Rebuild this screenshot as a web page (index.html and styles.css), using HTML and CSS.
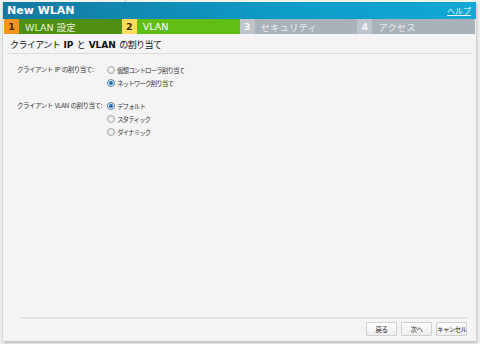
FILE: index.html
```html
<!DOCTYPE html>
<html lang="ja">
<head>
    <meta charset="UTF-8">
    <title>New WLAN</title>
    <link rel="stylesheet" href="styles.css">
</head>
<body>
    <div class="top-strip"><span class="strip-line"></span></div>

    <div class="dialog">
        <div class="title-bar">
            <span class="title">New WLAN</span>
            <a class="help" href="#">ヘルプ</a>
        </div>

        <div class="steps">
            <div class="step done"><span class="num">1</span><span class="label">WLAN 設定</span></div>
            <div class="step active"><span class="num">2</span><span class="label">VLAN</span></div>
            <div class="step todo"><span class="num">3</span><span class="label">セキュリティ</span></div>
            <div class="step todo"><span class="num">4</span><span class="label">アクセス</span></div>
        </div>

        <div class="content">
            <h2 class="section-title">クライアント <b>IP</b> と <b>VLAN</b> の割り当て</h2>

            <div class="form-row">
                <div class="form-label">クライアント IP の割り当て:</div>
                <div class="options">
                    <label class="option"><span class="radio"></span>仮想コントローラ割り当て</label>
                    <label class="option"><span class="radio checked"></span>ネットワーク割り当て</label>
                </div>
            </div>

            <div class="form-row">
                <div class="form-label">クライアント VLAN の割り当て:</div>
                <div class="options">
                    <label class="option"><span class="radio checked"></span>デフォルト</label>
                    <label class="option"><span class="radio"></span>スタティック</label>
                    <label class="option"><span class="radio"></span>ダイナミック</label>
                </div>
            </div>
        </div>

        <div class="footer">
            <button class="btn">戻る</button>
            <button class="btn">次へ</button>
            <button class="btn">キャンセル</button>
        </div>
    </div>
</body>
</html>
```

FILE: styles.css
```css
body {
    margin: 0;
    padding: 0;
    width: 480px;
    height: 344px;
    background-color: #ececec;
    font-family: "Noto Sans CJK JP", "DejaVu Sans", sans-serif;
    overflow: hidden;
}

.top-strip {
    height: 2px;
    background: #f2f2f2;
    position: relative;
}

.strip-line {
    position: absolute;
    left: 125px;
    top: 0;
    width: 1px;
    height: 2px;
    background: #c8c8c8;
}

.dialog {
    margin-left: 3px;
    width: 473px;
    height: 339px;
    background-color: #f4f4f4;
    box-shadow: -1px 0 0 #d6d6d6, 1px 2px 2px rgba(0, 0, 0, 0.18);
    display: flex;
    flex-direction: column;
}

.title-bar {
    height: 17px;
    background: linear-gradient(to right, #1479a0, #0d9cc8 60%, #10a8d4);
    display: flex;
    align-items: center;
    justify-content: space-between;
    padding: 0 5px 0 4px;
}

.title {
    color: #ffffff;
    font-family: "DejaVu Sans", sans-serif;
    font-weight: bold;
    font-size: 11px;
}

.help {
    color: #e6f6fc;
    font-size: 8px;
    text-decoration: underline;
}

.steps {
    display: flex;
    height: 15px;
    margin: 0 1px;
}

.step {
    flex: 1;
    display: flex;
    align-items: center;
    font-size: 9.5px;
}

.step .num {
    width: 15px;
    height: 15px;
    display: flex;
    align-items: center;
    justify-content: center;
    font-family: "DejaVu Sans", sans-serif;
    font-weight: bold;
}

.step .label {
    padding-left: 6px;
    font-family: "DejaVu Sans", "Noto Sans CJK JP", sans-serif;
}

.step.done {
    background: #4f8f12;
    color: #e8f3d8;
}

.step.done .num {
    background: #f7941d;
    color: #3a2a00;
}

.step.active {
    background: #62bd14;
    color: #ffffff;
}

.step.active .num {
    background: #fedc5a;
    color: #3a3000;
}

.step.todo {
    background: #a9b1b9;
    color: #e9edf1;
}

.step.todo .num {
    background: #bec4cb;
    color: #f4f6f8;
}

.content {
    flex: 1;
    padding: 0 4px;
}

.section-title {
    margin: 0;
    padding: 4px 0 2px 3px;
    font-size: 9px;
    font-weight: normal;
    color: #111;
    letter-spacing: -0.6px;
    word-spacing: 2px;
    white-space: nowrap;
    border-bottom: 1px solid #dcdcdc;
}

.section-title b {
    font-family: "DejaVu Sans", sans-serif;
    letter-spacing: 0;
}

.form-row {
    display: flex;
    padding-left: 10px;
    margin-top: 9px;
}

.form-row + .form-row {
    margin-top: 10px;
}

.form-label {
    width: 90px;
    font-size: 6.5px;
    letter-spacing: -0.5px;
    word-spacing: 1px;
    color: #333;
    line-height: 13px;
    white-space: nowrap;
}

.options {
    display: flex;
    flex-direction: column;
}

.option {
    display: flex;
    align-items: center;
    height: 13px;
    font-size: 6.5px;
    letter-spacing: -0.9px;
    color: #333;
    white-space: nowrap;
}

.radio {
    width: 6px;
    height: 6px;
    border-radius: 50%;
    border: 1px solid #a8a8a8;
    background: radial-gradient(circle, #fafafa, #dcdcdc);
    margin-right: 2px;
    box-sizing: content-box;
}

.radio.checked {
    border-color: #5a86a8;
    background: radial-gradient(circle, #1d5e9a 0, #2b78bc 1.5px, #e6eef6 2.5px, #c8d8e8 100%);
}

.footer {
    margin: 0 9px 5px 16px;
    border-top: 2px solid #e2e6ea;
    padding-top: 3px;
    display: flex;
    justify-content: flex-end;
    gap: 4px;
}

.btn {
    width: 31px;
    height: 14px;
    padding: 0;
    font-family: "Noto Sans CJK JP", sans-serif;
    font-size: 6.5px;
    letter-spacing: -0.6px;
    white-space: nowrap;
    color: #222;
    background: linear-gradient(#ffffff, #ededed);
    border: 1px solid #d0d0d0;
    border-radius: 1px;
}
```
